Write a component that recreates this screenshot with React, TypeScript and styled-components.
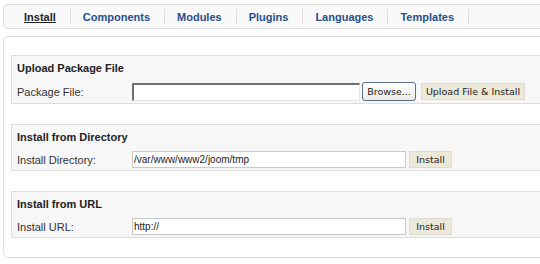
import React from "react";
import styled, { createGlobalStyle } from "styled-components";

const Global = createGlobalStyle`
  html, body { margin: 0; padding: 0; background: #ffffff; overflow: hidden; }
  body { font-family: "Liberation Sans", Arial, sans-serif; font-size: 11px; color: #333; }
`;

const Page = styled.div`
  width: 560px;
  padding: 4px 0 0 3px;
  box-sizing: border-box;
`;

const TabBar = styled.div`
  display: flex;
  align-items: center;
  height: 23px;
  padding-left: 8px;
  border: 1px solid #dcdcdc;
  border-radius: 5px;
  background: #f9f9f9;
`;

const Tab = styled.a<{ $active?: boolean }>`
  display: flex;
  align-items: center;
  height: 15px;
  padding: 0 14px 0 12px;
  border-right: 1px solid #dddddd;
  font-weight: bold;
  font-size: 11px;
  color: ${(p) => (p.$active ? "#222" : "#1f4f8e")};
  text-decoration: ${(p) => (p.$active ? "underline" : "none")};
  cursor: pointer;
`;

const Panel = styled.div`
  margin-top: 7px;
  border: 1px solid #dcdcdc;
  border-radius: 5px;
  background: #fff;
  padding: 18px 0 19px 7px;
  display: flex;
  flex-direction: column;
  gap: 20px;
`;

const Fieldset = styled.div`
  border: 1px solid #dddddd;
  background: #f7f7f7;
  padding: 4px 5px 2px;
`;

const Title = styled.div`
  font-weight: bold;
  font-size: 11px;
  line-height: 16px;
  color: #222;
`;

const Row = styled.div`
  display: flex;
  align-items: center;
  margin-top: 6px;
`;

const Label = styled.label`
  width: 115px;
  flex: none;
  font-size: 11px;
  color: #333;
`;

const FileInput = styled.div`
  width: 228px;
  height: 18px;
  box-sizing: border-box;
  background: #fff;
  border-top: 2px solid #6f6f6f;
  border-left: 2px solid #6f6f6f;
  border-right: 1px solid #e4e4e4;
  border-bottom: 1px solid #e4e4e4;
`;

const TextInput = styled.input`
  width: 274px;
  height: 17px;
  box-sizing: border-box;
  border: 1px solid #c9c9c9;
  background: #fff;
  padding: 0 1px;
  font-family: "Liberation Sans", Arial, sans-serif;
  font-size: 10px;
  color: #222;
  outline: none;
`;

const BrowseButton = styled.button`
  margin-left: 2px;
  width: 54px;
  height: 19px;
  box-sizing: border-box;
  border: 1px solid #5b6f85;
  border-radius: 3px;
  background: linear-gradient(#ffffff, #ecebe6);
  font-family: "DejaVu Sans", "Liberation Sans", sans-serif;
  font-size: 9.5px;
  color: #222;
  padding: 0;
`;

const FlatButton = styled.button<{ $gap: number; $w: number }>`
  margin-left: ${(p) => p.$gap}px;
  width: ${(p) => p.$w}px;
  height: 17px;
  box-sizing: border-box;
  border: 1px solid #dcdcd0;
  background: #ece9d8;
  font-family: "DejaVu Sans", "Liberation Sans", sans-serif;
  font-size: 9.5px;
  color: #222;
  padding: 0;
`;

const tabs = ["Install", "Components", "Modules", "Plugins", "Languages", "Templates"];

export default function App() {
  return (
    <>
      <Global />
      <Page>
        <TabBar>
          {tabs.map((t, i) => (
            <Tab key={t} $active={i === 0}>
              {t}
            </Tab>
          ))}
        </TabBar>
        <Panel>
          <Fieldset>
            <Title>Upload Package File</Title>
            <Row>
              <Label>Package File:</Label>
              <FileInput />
              <BrowseButton>Browse...</BrowseButton>
              <FlatButton $gap={5} $w={104}>Upload File &amp; Install</FlatButton>
            </Row>
          </Fieldset>
          <Fieldset>
            <Title>Install from Directory</Title>
            <Row>
              <Label>Install Directory:</Label>
              <TextInput defaultValue="/var/www/www2/joom/tmp" />
              <FlatButton $gap={3} $w={43}>Install</FlatButton>
            </Row>
          </Fieldset>
          <Fieldset>
            <Title>Install from URL</Title>
            <Row>
              <Label>Install URL:</Label>
              <TextInput defaultValue="http://" />
              <FlatButton $gap={3} $w={43}>Install</FlatButton>
            </Row>
          </Fieldset>
        </Panel>
      </Page>
    </>
  );
}
